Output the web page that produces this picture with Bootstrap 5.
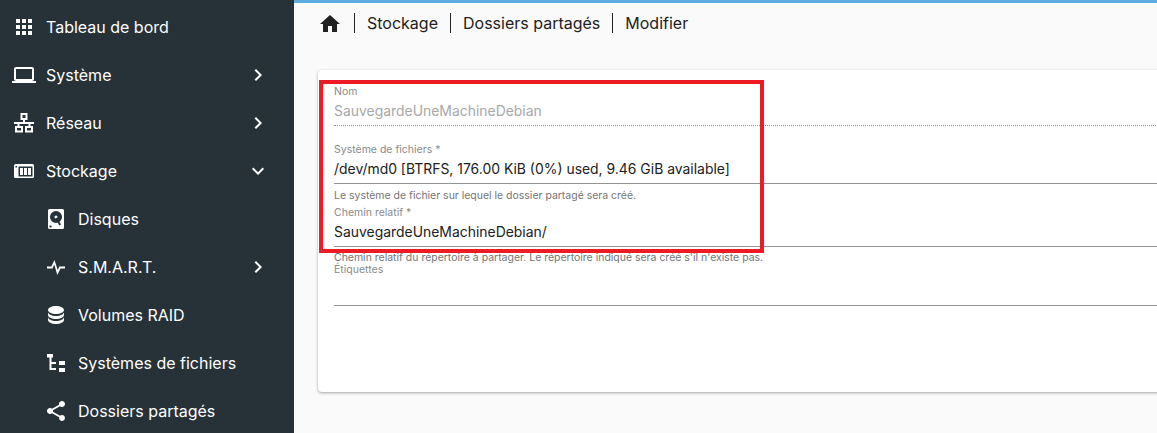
<!DOCTYPE html>
<html lang="fr">
<head>
  <meta charset="UTF-8">
  <meta name="viewport" content="width=device-width, initial-scale=1.0">
  <title>Modifier</title>
  <link href="https://cdn.jsdelivr.net/npm/bootstrap@5.3.0/dist/css/bootstrap.min.css" rel="stylesheet">
  <style>
    html, body {
      height: 433px;
      overflow: hidden;
    }

    body {
      background-color: #fafafa;
      font-family: Inter, "Liberation Sans", sans-serif;
    }

    .side-menu {
      width: 294px;
      height: 433px;
      padding-top: 3px;
      background-color: #263238;
      color: #fff;
      flex-shrink: 0;
      overflow: hidden;
    }

    .menu-row {
      height: 48px;
      padding-left: 12px;
      padding-right: 24px;
      font-size: 16px;
    }

    .menu-row.sub {
      padding-left: 44px;
    }

    .menu-icon {
      width: 24px;
      height: 24px;
      margin-right: 10px;
      fill: #fff;
      flex-shrink: 0;
    }

    .menu-chevron {
      width: 24px;
      height: 24px;
      margin-left: auto;
      fill: #fff;
    }

    .main-area {
      min-width: 0;
      border-top: 3px solid #5dade2;
    }

    .crumbs {
      height: 42px;
      padding-left: 24px;
      padding-bottom: 2px;
      font-size: 16px;
      color: #212121;
    }

    .crumbs svg {
      width: 24px;
      height: 24px;
      fill: #212121;
      margin-top: 2px;
    }

    .crumbs span {
      padding: 0 12px;
      line-height: 20px;
      border-left: 1px solid #212121;
    }

    .crumbs svg + span {
      margin-left: 12px;
    }

    .form-card {
      width: 1100px;
      height: 322px;
      margin: 25px 0 0 24px;
      padding: 14px 16px 0;
      background-color: #fff;
      border-radius: 4px;
      box-shadow: 0 1px 3px rgba(0, 0, 0, .35);
    }

    .fld-label {
      padding-top: 1px;
      margin-bottom: -1px;
      font-size: 10.5px;
      line-height: 14px;
      color: #8a8a8a;
    }

    .fld-label.spaced {
      margin-top: 16px;
    }

    .fld-label.after-hint {
      margin-top: 3px;
    }

    .fld-label.tight {
      margin-top: -2px;
    }

    .fld-value {
      height: 28px;
      padding-top: 3px;
      font-size: 13.93px;
      line-height: 20px;
      color: #212121;
      border-bottom: 1px solid #949494;
    }

    .fld-value.off {
      color: #a8a8a8;
      border-bottom: 1px dotted #949494;
    }

    .fld-value.empty {
      height: 30px;
    }

    .fld-hint {
      margin-top: 5px;
      font-size: 10.48px;
      line-height: 13px;
      color: #757575;
    }

    .fld-hint.close {
      margin-top: 4px;
    }

    .red-box {
      position: absolute;
      left: 319px;
      top: 80px;
      width: 445px;
      height: 173px;
      border: 4px solid #ed1c24;
      pointer-events: none;
    }
  </style>
</head>
<body>
  <div class="d-flex">
    <nav class="side-menu">
      <div class="menu-row d-flex align-items-center">
        <svg class="menu-icon" viewBox="0 0 24 24"><path d="M4 8h4V4H4v4zm6 12h4v-4h-4v4zm-6 0h4v-4H4v4zm0-6h4v-4H4v4zm6 0h4v-4h-4v4zm6-10v4h4V4h-4zm-6 4h4V4h-4v4zm6 6h4v-4h-4v4zm0 6h4v-4h-4v4z"/></svg>
        Tableau de bord
      </div>
      <div class="menu-row d-flex align-items-center">
        <svg class="menu-icon" viewBox="0 0 24 24"><path d="M20 18c1.100 0 1.990-.900 1.990-2L22 6c0-1.100-.900-2-2-2H4c-1.100 0-2 .900-2 2v10c0 1.100.900 2 2 2H0v2h24v-2h-4zM4 6h16v10H4V6z"/></svg>
        Système
        <svg class="menu-chevron" viewBox="0 0 24 24"><path d="M8.590 16.590 13.170 12 8.590 7.410 10 6l6 6-6 6z"/></svg>
      </div>
      <div class="menu-row d-flex align-items-center">
        <svg class="menu-icon" viewBox="0 0 24 24"><path fill-rule="evenodd" d="M8.500 2h7v7H13v2h9v2h-3.500v2H21v6.500h-8V15h3.500v-2h-9v2H11v6.500H3V15h2.500v-2H2v-2h9V9H8.500zm2 2v3h3V4zM5 17v2.500h4V17zm10 0v2.500h4V17z"/></svg>
        Réseau
        <svg class="menu-chevron" viewBox="0 0 24 24"><path d="M8.590 16.590 13.170 12 8.590 7.410 10 6l6 6-6 6z"/></svg>
      </div>
      <div class="menu-row d-flex align-items-center">
        <svg class="menu-icon" viewBox="0 0 24 24"><path fill-rule="evenodd" d="M3.500 5h17A1.500 1.500 0 0 1 22 6.500v11a1.500 1.500 0 0 1-1.500 1.500h-17A1.500 1.500 0 0 1 2 17.500v-11A1.500 1.500 0 0 1 3.500 5zm0 2v1.500H5V7zm3 .5v10h14v-10zM8 9h3v7H8zm4 0h3v7h-3zm4 0h3v7h-3z"/></svg>
        Stockage
        <svg class="menu-chevron" viewBox="0 0 24 24"><path d="M16.590 8.590 12 13.170 7.410 8.590 6 10l6 6 6-6z"/></svg>
      </div>
      <div class="menu-row sub d-flex align-items-center">
        <svg class="menu-icon" viewBox="0 0 24 24"><path fill-rule="evenodd" d="M5.500 2h13A1.500 1.500 0 0 1 20 3.500v17a1.500 1.500 0 0 1-1.500 1.500h-13A1.500 1.500 0 0 1 4 20.500v-17A1.500 1.500 0 0 1 5.500 2zM12 4a6 6 0 1 0 0 12 6 6 0 0 0 0-12zm0 4.500a1.500 1.500 0 1 1 0 3 1.500 1.500 0 0 1 0-3zM5.500 18.500v2h2v-2z"/><path fill="#263238" d="M11.500 11.500l1.700-1 3.800 7-1.700 1z"/></svg>
        Disques
      </div>
      <div class="menu-row sub d-flex align-items-center">
        <svg class="menu-icon" viewBox="0 0 24 24"><path d="M3 11.500h4.300L10.500 5l3.200 10 1.600-3.500H21v2h-4.500L13.300 20l-3-10.500-1.800 4H3z"/></svg>
        S.M.A.R.T.
        <svg class="menu-chevron" viewBox="0 0 24 24"><path d="M8.590 16.590 13.170 12 8.590 7.410 10 6l6 6-6 6z"/></svg>
      </div>
      <div class="menu-row sub d-flex align-items-center">
        <svg class="menu-icon" viewBox="0 0 24 24"><path d="M12 3C7.580 3 4 4.790 4 7s3.580 4 8 4 8-1.790 8-4-3.580-4-8-4M4 9v3c0 2.210 3.580 4 8 4s8-1.790 8-4V9c0 2.210-3.580 4-8 4s-8-1.790-8-4m0 5v3c0 2.210 3.580 4 8 4s8-1.790 8-4v-3c0 2.210-3.580 4-8 4s-8-1.790-8-4z"/></svg>
        Volumes RAID
      </div>
      <div class="menu-row sub d-flex align-items-center">
        <svg class="menu-icon" viewBox="0 0 24 24"><path d="M3 3h6v3.500H7.500V11H12v2H7.500v4H12v2H5.500V6.500H3zM15 10h6v4h-6zM15 17h6v4h-6z"/></svg>
        Systèmes de fichiers
      </div>
      <div class="menu-row sub d-flex align-items-center">
        <svg class="menu-icon" viewBox="0 0 24 24"><path d="M18 16.080c-.760 0-1.440.300-1.960.770L8.910 12.700c.050-.230.090-.460.090-.700s-.040-.470-.090-.700l7.050-4.110c.540.500 1.250.810 2.040.810 1.660 0 3-1.340 3-3s-1.340-3-3-3-3 1.340-3 3c0 .240.040.470.090.700L8.040 9.810C7.500 9.310 6.790 9 6 9c-1.660 0-3 1.340-3 3s1.340 3 3 3c.790 0 1.500-.310 2.040-.810l7.120 4.160c-.050.210-.080.430-.080.650 0 1.610 1.310 2.920 2.920 2.920s2.920-1.310 2.920-2.920-1.310-2.920-2.920-2.920z"/></svg>
        Dossiers partagés
      </div>
    </nav>

    <main class="main-area flex-grow-1">
      <div class="crumbs d-flex align-items-center">
        <svg viewBox="0 0 24 24"><path d="M10 20v-6h4v6h5v-8h3L12 3 2 12h3v8z"/></svg>
        <span>Stockage</span>
        <span>Dossiers partagés</span>
        <span>Modifier</span>
      </div>

      <div class="form-card">
        <div class="fld-label">Nom</div>
        <div class="fld-value off">SauvegardeUneMachineDebian</div>
        <div class="fld-label spaced">Système de fichiers *</div>
        <div class="fld-value">/dev/md0 [BTRFS, 176.00 KiB (0%) used, 9.46 GiB available]</div>
        <div class="fld-hint">Le système de fichier sur lequel le dossier partagé sera créé.</div>
        <div class="fld-label after-hint">Chemin relatif *</div>
        <div class="fld-value">SauvegardeUneMachineDebian/</div>
        <div class="fld-hint close">Chemin relatif du répertoire à partager. Le répertoire indiqué sera créé s'il n'existe pas.</div>
        <div class="fld-label tight">Étiquettes</div>
        <div class="fld-value empty"></div>
      </div>
    </main>
  </div>

  <div class="red-box"></div>

  <script src="https://cdn.jsdelivr.net/npm/bootstrap@5.3.0/dist/js/bootstrap.bundle.min.js"></script>
</body>
</html>
